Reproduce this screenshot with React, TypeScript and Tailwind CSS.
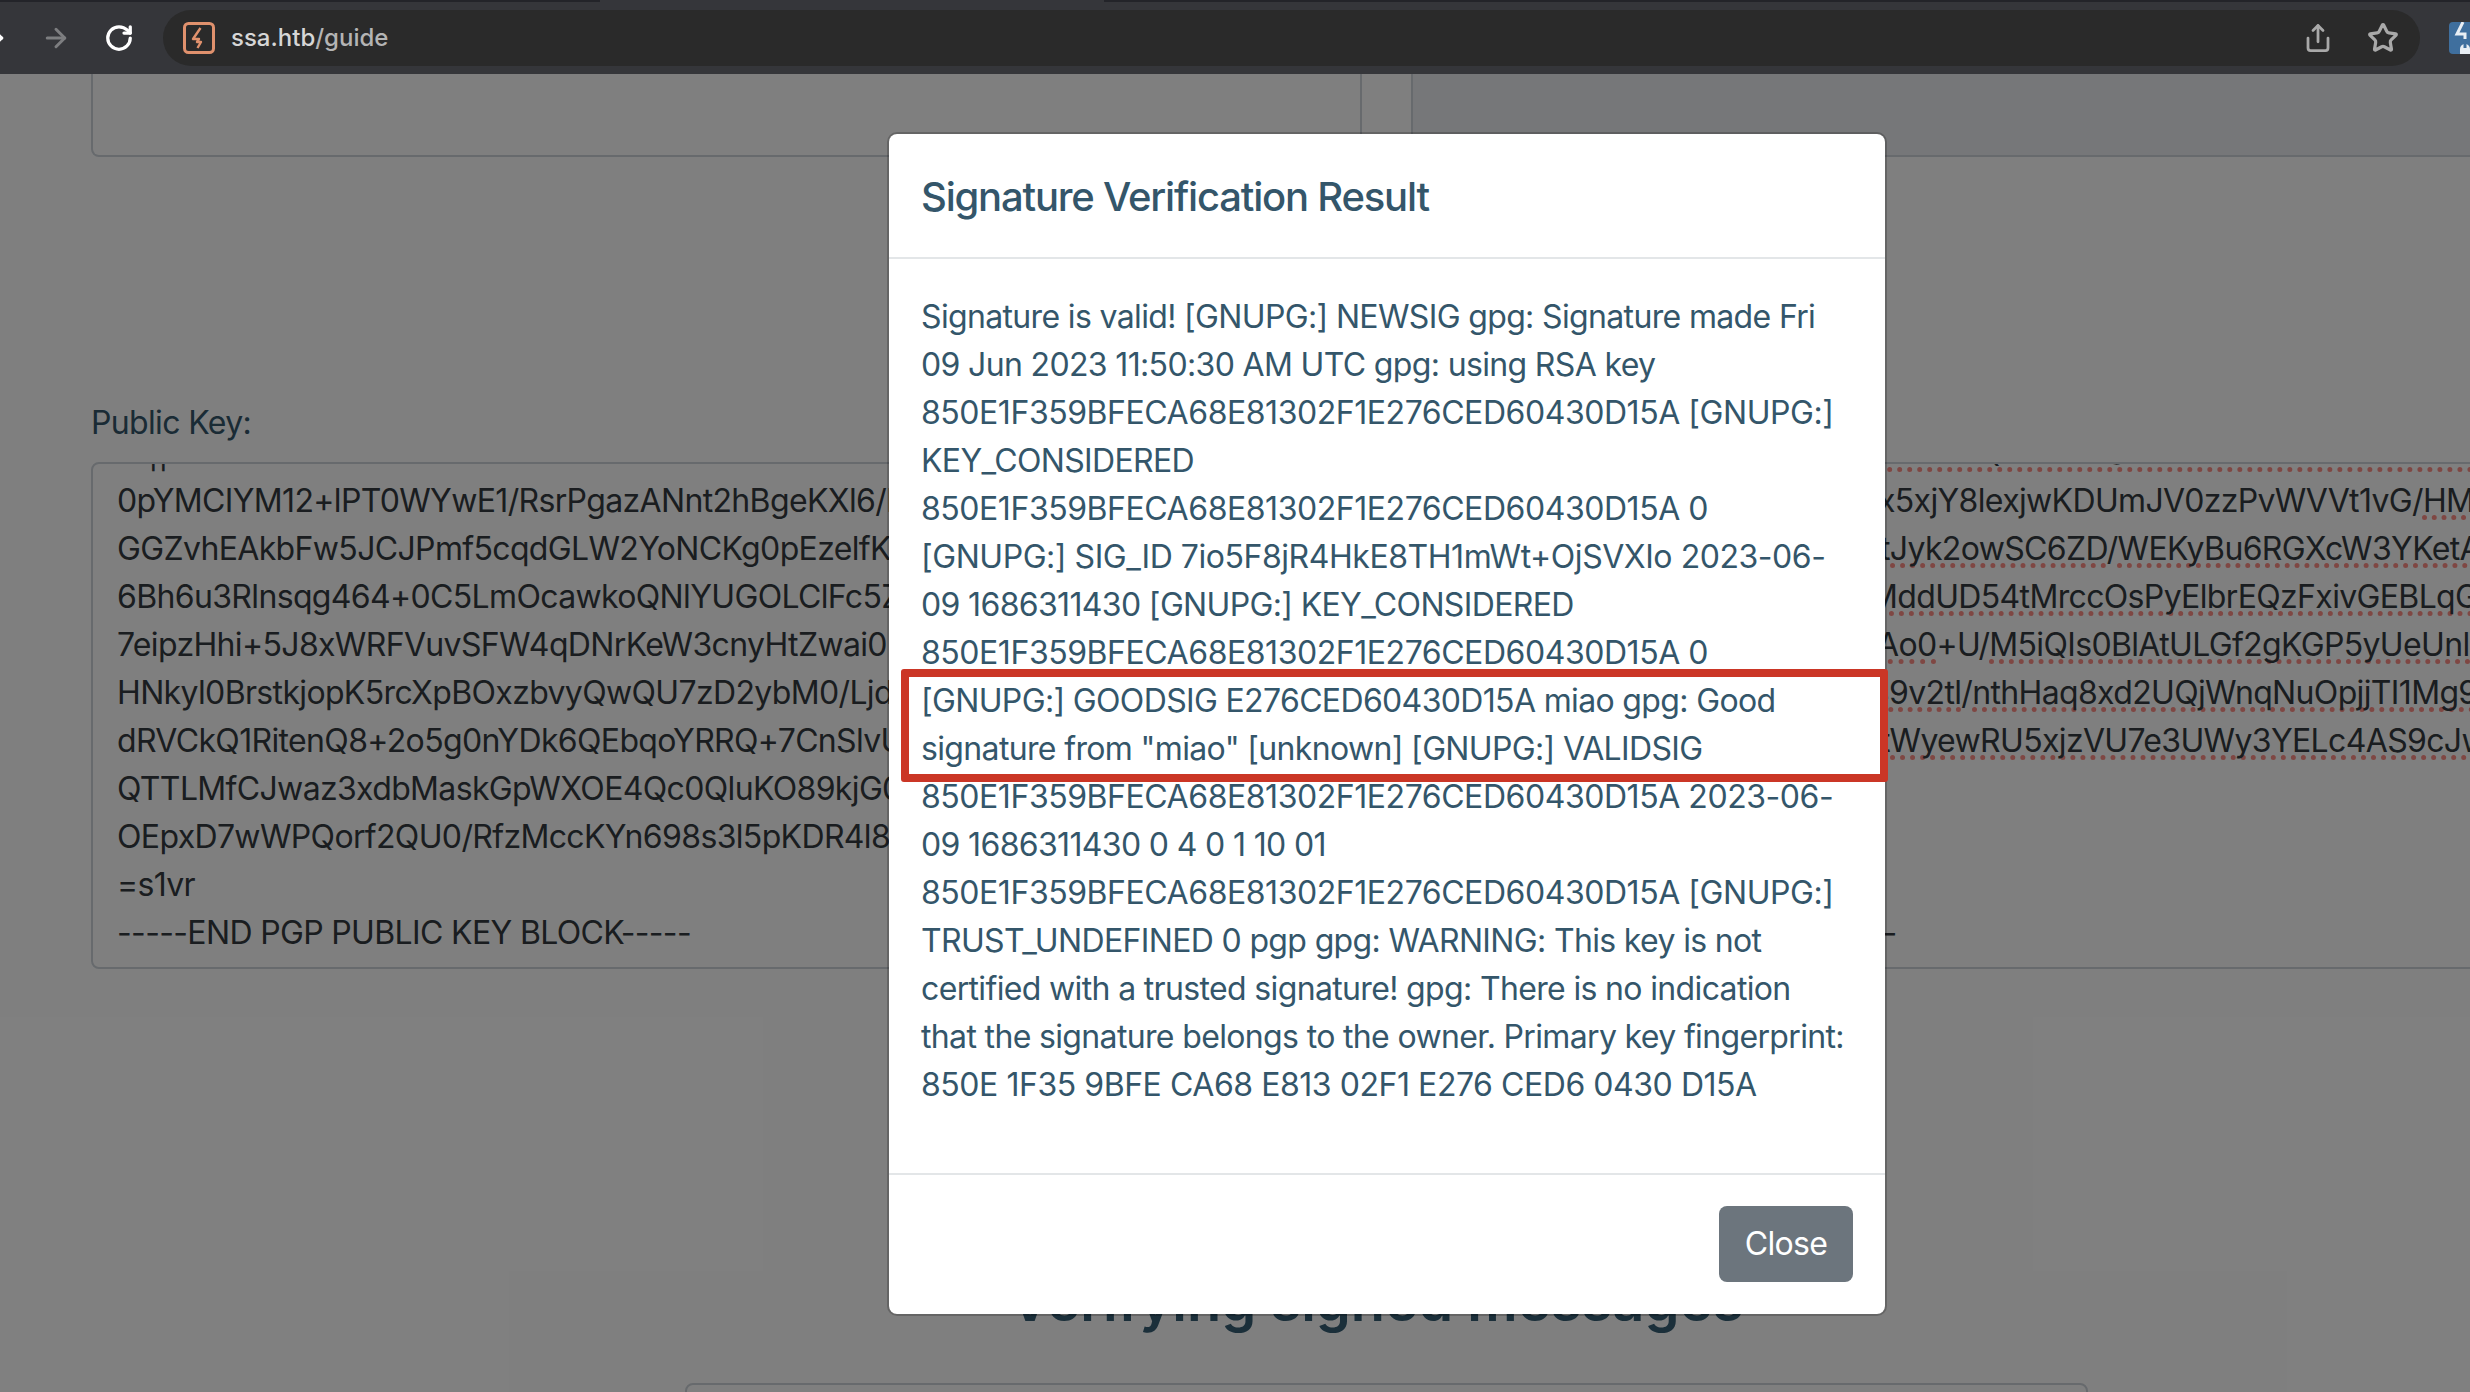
import { ArrowRight, RotateCw, Share, Star } from "lucide-react";

const publicKeyLines = [
  "0pYMCIYM12+lPT0WYwE1/RsrPgazANnt2hBgeKXl6/HdQ2",
  "GGZvhEAkbFw5JCJPmf5cqdGLW2YoNCKg0pEzelfK8aRm",
  "6Bh6u3Rlnsqg464+0C5LmOcawkoQNlYUGOLClFc5ZtPw",
  "7eipzHhi+5J8xWRFVuvSFW4qDNrKeW3cnyHtZwai0KsLv",
  "HNkyl0BrstkjopK5rcXpBOxzbvyQwQU7zD2ybM0/LjdTe",
  "dRVCkQ1RitenQ8+2o5g0nYDk6QEbqoYRRQ+7CnSlvUaHc",
  "QTTLMfCJwaz3xdbMaskGpWXOE4Qc0QluKO89kjG0rBn",
  "OEpxD7wWPQorf2QU0/RfzMccKYn698s3l5pKDR4l8Ixy",
  "=s1vr",
  "-----END PGP PUBLIC KEY BLOCK-----",
];

const resultLines = [
  "Signature is valid! [GNUPG:] NEWSIG gpg: Signature made Fri",
  "09 Jun 2023 11:50:30 AM UTC gpg: using RSA key",
  "850E1F359BFECA68E81302F1E276CED60430D15A [GNUPG:]",
  "KEY_CONSIDERED",
  "850E1F359BFECA68E81302F1E276CED60430D15A 0",
  "[GNUPG:] SIG_ID 7io5F8jR4HkE8TH1mWt+OjSVXIo 2023-06-",
  "09 1686311430 [GNUPG:] KEY_CONSIDERED",
  "850E1F359BFECA68E81302F1E276CED60430D15A 0",
  '[GNUPG:] GOODSIG E276CED60430D15A miao gpg: Good',
  'signature from "miao" [unknown] [GNUPG:] VALIDSIG',
  "850E1F359BFECA68E81302F1E276CED60430D15A 2023-06-",
  "09 1686311430 0 4 0 1 10 01",
  "850E1F359BFECA68E81302F1E276CED60430D15A [GNUPG:]",
  "TRUST_UNDEFINED 0 pgp gpg: WARNING: This key is not",
  "certified with a trusted signature! gpg: There is no indication",
  "that the signature belongs to the owner. Primary key fingerprint:",
  "850E 1F35 9BFE CA68 E813 02F1 E276 CED6 0430 D15A",
];

const misspelled =
  "underline decoration-dotted decoration-[#ff8f87] decoration-[5px] underline-offset-[3px] [text-decoration-skip-ink:none]";

const Favicon = () => (
  <svg width="32" height="32" viewBox="0 0 32 32" fill="none" className="shrink-0">
    <rect x="1.5" y="1.5" width="29" height="29" rx="4" stroke="#e0916d" strokeWidth="3" />
    <path d="M17.5 6 10 17h6l-2 3h4l-3.5 6" stroke="#e0916d" strokeWidth="2.4" strokeLinejoin="round" />
  </svg>
);

const ExtensionIcon = () => (
  <svg width="40" height="32" viewBox="0 0 40 32" className="ml-[29px] shrink-0">
    <rect width="40" height="32" rx="4" fill="#3f6f9e" />
    <path d="M14 0 8 12h8v5" stroke="#e8eef4" strokeWidth="3" fill="none" />
    <path d="M16 22a5 5 0 0 0-5 5v5h10v-5a5 5 0 0 0-5-5Z" fill="#e8eef4" />
    <rect x="14.5" y="20" width="3" height="6" fill="#3f6f9e" />
  </svg>
);

const Toolbar = () => (
  <div className="shrink-0">
    <div className="flex h-[2px] bg-[#35363a]">
      <div className="w-[600px] bg-[#232429]" />
      <div className="w-[504px]" />
      <div className="flex-1 bg-[#232429]" />
    </div>
    <div className="flex h-[72px] items-center bg-[#35363a]">
      <ArrowRight size={30} strokeWidth={2.4} className="ml-[-22px] shrink-0 text-white" />
      <ArrowRight size={30} strokeWidth={2.4} className="ml-[33px] shrink-0 text-[#7d7e80]" />
      <RotateCw size={30} strokeWidth={2.6} className="ml-[33px] shrink-0 text-white" />
      <div className="ml-[29px] flex h-[56px] w-[2257px] shrink-0 items-center rounded-full bg-[#2a2a2a] pl-[20px] pr-[20px]">
        <Favicon />
        <span className="ml-[16px] text-[24px] font-medium text-[#d6d6d6]">
          ssa.htb<span className="text-[#b4b4b4]">/guide</span>
        </span>
        <div className="ml-auto flex items-center gap-[34px]">
          <Share size={30} strokeWidth={2.2} className="text-[#a9a9a9]" />
          <Star size={32} strokeWidth={2.4} className="mr-[1px] text-[#a9a9a9]" />
        </div>
      </div>
      <ExtensionIcon />
    </div>
  </div>
);

const PublicKeyBox = () => (
  <div className="h-[507px] overflow-hidden whitespace-nowrap rounded-lg border-2 border-[#ced4da] bg-white px-6 text-[32px] leading-[48px] tracking-[-0.65px] text-[#343a40]">
    <div className="mt-[-35px] pl-[31px]">||</div>
    {publicKeyLines.map((line) => (
      <div key={line}>{line}</div>
    ))}
  </div>
);

const SignatureBox = () => (
  <div className="h-[507px] overflow-hidden whitespace-nowrap rounded-lg border-2 border-[#ced4da] bg-white px-6 text-[32px] leading-[48px] tracking-[-0.65px] text-[#343a40]">
    <div className="mt-[-35px]">
      <span className={misspelled}>
        QRMXWKTSLZVBEHFTUDWIMXRNKQVAGOZSCBLTUHWFNDPIKXRMVSQRMXWKTSLZVBEHjFTUDWIMXRNKQVAGOZSCByLTUHWFNDPIKXRMVS
      </span>
    </div>
    <div className="pl-[441px]">
      x5xjY8lexjwKDUmJV0zzPvWVVt1vG/<span className={misspelled}>HMcQdT</span>
    </div>
    <div className="pl-[443px]">
      <span className={misspelled}>tJyk2owSC6ZD</span>/<span className={misspelled}>WEKyBu6RGXcW3YKetAoL</span>
    </div>
    <div className="pl-[432px]">
      <span className={misspelled}>MddUD54tMrccOsPyElbrEQzFxivGEBLqGwS</span>
    </div>
    <div className="pl-[440px]">
      <span className={misspelled}>Ao0</span>+U/<span className={misspelled}>M5iQIs0BlAtULGf2gKGP5yUeUnlVbX</span>
    </div>
    <div className="pl-[432px]">
      <span className={misspelled}>49v2tl</span>/<span className={misspelled}>nthHaq8xd2UQjWnqNuOpjjTI1Mg9kR</span>
    </div>
    <div className="pl-[443px]">
      <span className={misspelled}>tWyewRU5xjzVU7e3UWy3YELc4AS9cJweHt</span>
    </div>
    <div className="h-[144px]" />
    <div>-----END PGP SIGNATURE-----</div>
  </div>
);

const ResultModal = () => (
  <div className="relative ml-[887px] mt-[58px] h-[1184px] w-[1000px] rounded-[10px] border-2 border-black/20 bg-white bg-clip-padding text-[#34566a]">
    <div className="flex h-[125px] items-center border-b-2 border-[#e3e6e8] pl-[32px] pr-[32px] pt-[3px]">
      <h5 className="text-[40px] font-medium leading-[60px] tracking-[-1.2px]">Signature Verification Result</h5>
    </div>
    <div className="h-[914px] whitespace-nowrap pl-[32px] pr-[32px] pt-[34px] text-[32px] leading-[48px] tracking-[-0.65px]">
      {resultLines.map((line, i) => (
        <div key={i} className={/^850E|SIG_ID/.test(line) ? "tracking-[-0.45px]" : ""}>
          {line}
        </div>
      ))}
    </div>
    <div className="flex h-[141px] justify-end border-t-2 border-[#e3e6e8] pr-[32px] pt-[31px]">
      <button className="h-[76px] w-[134px] rounded-lg bg-[#6c757d] text-[32px] tracking-[-0.65px] text-white">Close</button>
    </div>
    {/* red annotation from the screenshot */}
    <div className="absolute left-[12px] top-[535px] h-[113px] w-[987px] rounded-[3px] border-[8px] border-[#cb3626]" />
  </div>
);

export default function App() {
  return (
    <div className="flex h-[1392px] w-[2470px] flex-col overflow-hidden bg-white font-['Inter',sans-serif]">
      <Toolbar />
      <main className="relative flex-1 overflow-hidden">
        <div className="pl-[91px]">
          <div className="grid w-[2590px] grid-cols-[1271px_1270px] gap-x-[49px]">
            <div className="h-[83px] rounded-b-lg border-2 border-t-0 border-[#ced4da]" />
            <div className="h-[83px] rounded-b-lg border-2 border-t-0 border-[#ced4da] bg-[#eceef2]" />
            <label className="mt-[242px] mb-[15px] text-[32px] leading-[48px] tracking-[-0.65px] text-[#34566a]">Public Key:</label>
            <label className="mt-[242px] mb-[15px] text-[32px] leading-[48px] tracking-[-0.65px] text-[#34566a]">Signature:</label>
            <PublicKeyBox />
            <SignatureBox />
          </div>
        </div>
        <div className="ml-[685px] w-[1403px]">
          <h2 className="mt-[294px] pr-[20px] text-center text-[56px] font-semibold leading-[77px] text-[#365e74]">
            Verifying signed messages
          </h2>
          <div className="mt-[43px] h-[100px] rounded-lg border-2 border-[#ced4da]" />
        </div>
        <div className="absolute inset-0 bg-black/50">
          <ResultModal />
        </div>
      </main>
    </div>
  );
}
